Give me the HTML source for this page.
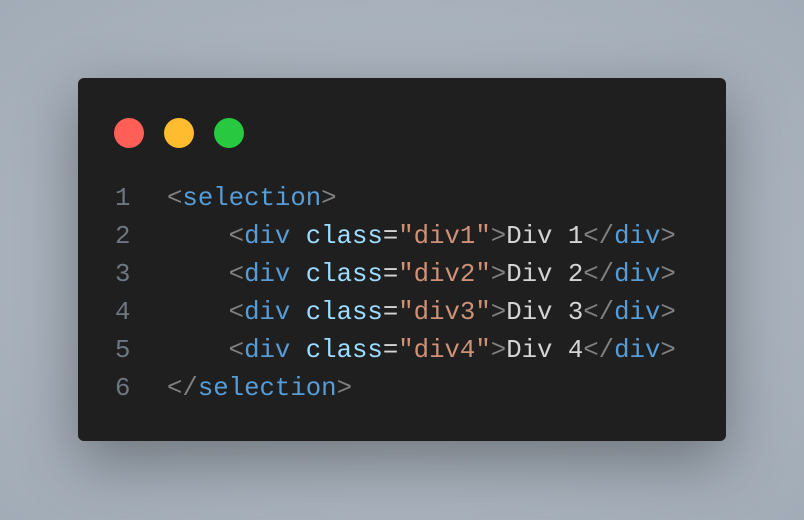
<!DOCTYPE html>
<html><head><style>
html,body{margin:0;width:804px;height:520px;overflow:hidden}
body{background:radial-gradient(ellipse at center,#b4bcc6 0%,#a2acb7 100%);position:relative}
.card{position:absolute;left:78px;top:78px;width:648px;height:363px;background:#1f1f1f;border-radius:6px;box-shadow:0 20px 60px rgba(0,0,0,.35)}
.dot{position:absolute;top:40px;width:30px;height:30px;border-radius:50%}
.code{position:absolute;left:37px;top:102px;font-family:"Liberation Mono",monospace;font-size:25.7px;line-height:38px;white-space:pre;color:#d4d4d4}
.n{color:#6e7681;display:inline-block;width:52px}
.p{color:#808080}.t{color:#569cd6}.a{color:#9cdcfe}.s{color:#ce9178}
</style></head><body>
<div class="card">
<div class="dot" style="left:36px;background:#ff5f57"></div>
<div class="dot" style="left:86px;background:#febc2e"></div>
<div class="dot" style="left:136px;background:#28c840"></div>
<div class="code"><span class="n">1</span><span class="p">&lt;</span><span class="t">selection</span><span class="p">&gt;</span>
<span class="n">2</span>    <span class="p">&lt;</span><span class="t">div</span> <span class="a">class</span>=<span class="s">"div1"</span><span class="p">&gt;</span>Div 1<span class="p">&lt;/</span><span class="t">div</span><span class="p">&gt;</span>
<span class="n">3</span>    <span class="p">&lt;</span><span class="t">div</span> <span class="a">class</span>=<span class="s">"div2"</span><span class="p">&gt;</span>Div 2<span class="p">&lt;/</span><span class="t">div</span><span class="p">&gt;</span>
<span class="n">4</span>    <span class="p">&lt;</span><span class="t">div</span> <span class="a">class</span>=<span class="s">"div3"</span><span class="p">&gt;</span>Div 3<span class="p">&lt;/</span><span class="t">div</span><span class="p">&gt;</span>
<span class="n">5</span>    <span class="p">&lt;</span><span class="t">div</span> <span class="a">class</span>=<span class="s">"div4"</span><span class="p">&gt;</span>Div 4<span class="p">&lt;/</span><span class="t">div</span><span class="p">&gt;</span>
<span class="n">6</span><span class="p">&lt;/</span><span class="t">selection</span><span class="p">&gt;</span></div>
</div>
</body></html>
